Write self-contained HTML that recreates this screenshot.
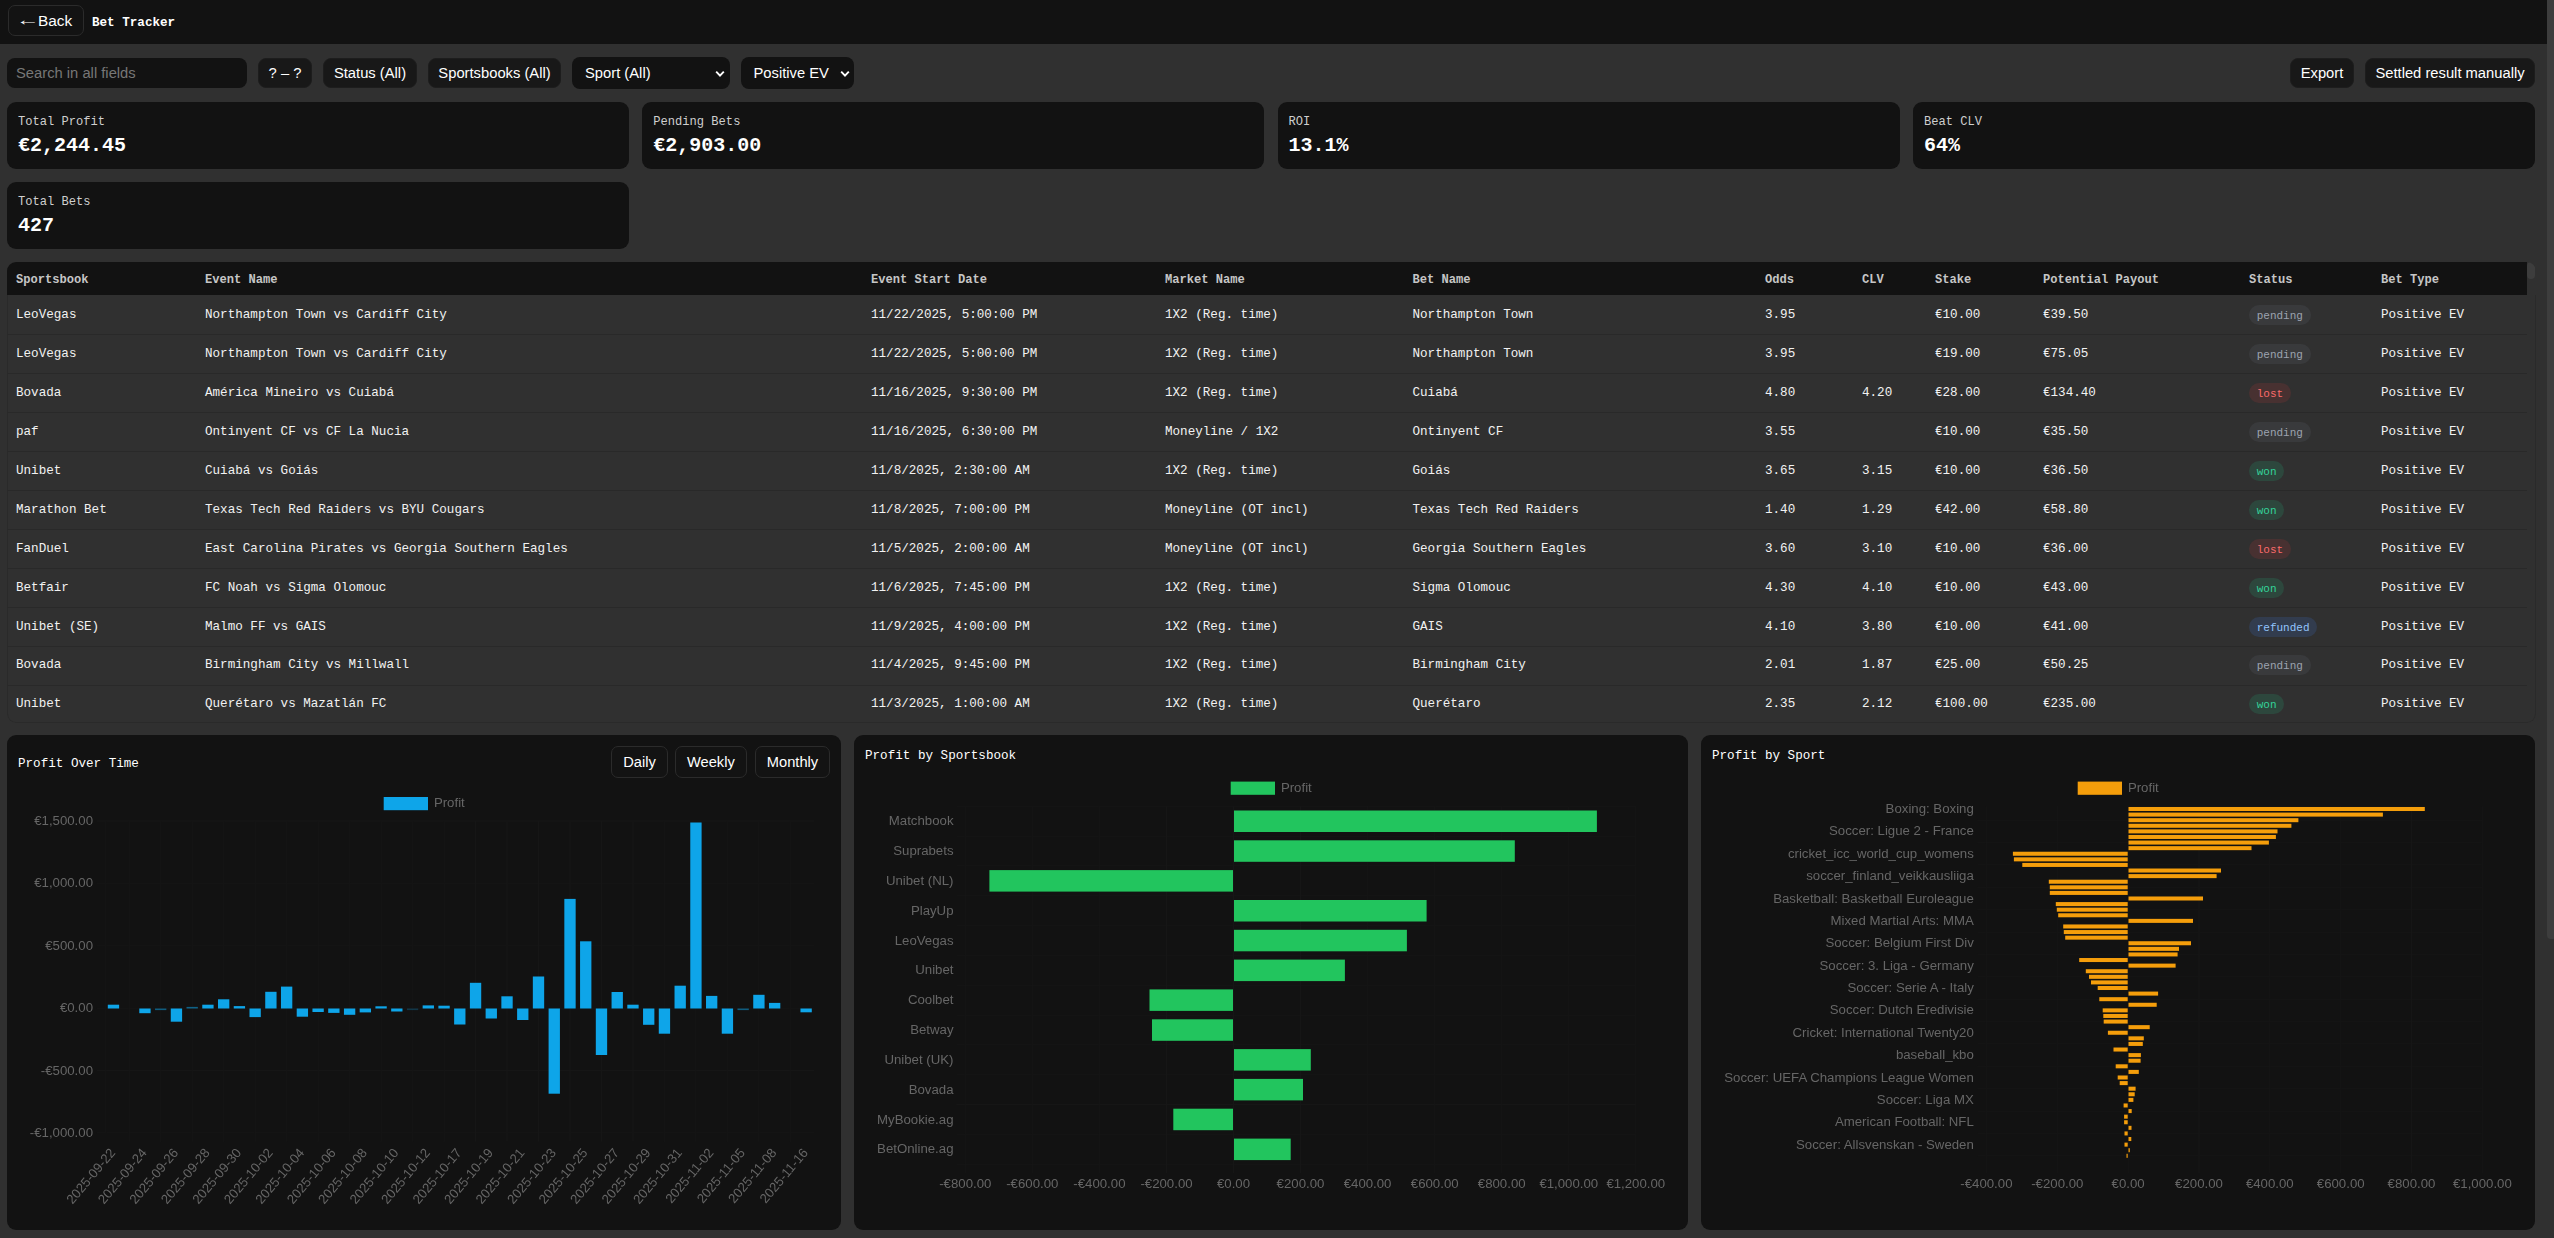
<!DOCTYPE html><html lang="en"><head><meta charset="utf-8"><title>Bet Tracker</title><style>
*{box-sizing:border-box;margin:0;padding:0}
html,body{width:2554px;height:1238px;overflow:hidden;background:#303030}
body{position:relative;font-family:"Liberation Mono", monospace;color:#f2f2f2}
.abs{position:absolute}
#hdr{left:0;top:0;width:2547px;height:44px;background:#121212}
#strip{left:2547px;top:0;width:7px;height:1238px;background:#303030}
#thumb{left:2547px;top:-8px;width:9px;height:947px;border-radius:4px;background:#3d3d3d}
.btn{position:absolute;font-family:"Liberation Sans", sans-serif;color:#fff;display:flex;align-items:center;justify-content:center;white-space:nowrap}
.ob{border:1px solid #2b2b2b;border-radius:7px;background:#131313;font-size:15.4px}
.fb{background:#181818;border-radius:8px;font-size:14.75px;top:58px;height:30px;border:1px solid #1d1d1d}
.srch{left:7px;top:58px;width:240px;height:30px;background:#121212;border-radius:8px;font-family:"Liberation Sans", sans-serif;font-size:14.75px;color:#777;line-height:30px;padding-left:9px;white-space:nowrap}
.sel{background:#121212;border-radius:8px;font-size:14.75px;top:57px;height:32px;justify-content:flex-start}
.card{position:absolute;background:#121212;border-radius:9px}
.card .l{position:absolute;left:11px;top:13px;font-size:12.1px;line-height:14px;color:#cfcfcf;white-space:nowrap}
.card .v{position:absolute;left:11px;top:32px;font-size:20px;line-height:24px;font-weight:bold;color:#fff;white-space:nowrap}
#tbl{left:7px;top:262px;width:2528.5px;height:461px;border-radius:9px;overflow:hidden}
.ln{position:absolute;background:#2a2a2a}
#thead{left:0;top:0;width:2520px;height:33.2px;background:#121212}
.th{position:absolute;top:0;height:33px;line-height:36.8px;font-size:12.1px;font-weight:bold;color:#c6c6c6;white-space:nowrap}
.tr{position:absolute;left:0;width:2520px;height:39px}
.td{position:absolute;top:0;height:38px;line-height:38px;font-size:12.6px;color:#f2f2f2;white-space:nowrap}
.bdg{position:absolute;top:9.3px;height:20px;line-height:22.4px;border-radius:10px;font-size:11px;padding:0 7.7px;white-space:nowrap}
.pending{background:#393a3c;color:#9ca3af}
.lost{background:#483131;color:#f96a6a}
.won{background:#2d473d;color:#34d399}
.refunded{background:#323c4e;color:#93c5fd}
.ct{position:absolute;font-size:12.6px;line-height:16px;color:#fff;white-space:nowrap}
svg text{font-family:"Liberation Sans", sans-serif;font-size:13.23px;fill:#666}
</style></head><body>
<div id="hdr" class="abs"></div>
<div id="strip" class="abs"></div><div id="thumb" class="abs"></div>
<div class="btn ob" style="left:8px;top:5px;width:76px;height:31px;justify-content:flex-start;padding-left:7.3px"><span style="display:inline-block;transform:translateY(-1px) scaleX(1.54);transform-origin:0 50%;width:21.7px">←</span>Back</div>
<div class="abs" style="left:92px;top:14.5px;font-size:12.6px;line-height:16px;font-weight:bold;color:#fff;white-space:nowrap">Bet Tracker</div>
<div class="abs srch">Search in all fields</div>
<div class="btn fb" style="left:258px;width:54px">? – ?</div>
<div class="btn fb" style="left:323px;width:94px">Status (All)</div>
<div class="btn fb" style="left:428px;width:133px">Sportsbooks (All)</div>
<div class="btn sel" style="left:572px;width:158px;padding-left:13px">Sport (All)<svg class="abs" style="right:5px;top:12.6px" width="10" height="8" viewBox="0 0 10 8"><path d="M1.2 1.6 L5 5.6 L8.8 1.6" fill="none" stroke="#fff" stroke-width="1.9"/></svg></div>
<div class="btn sel" style="left:741px;width:113px;padding-left:12.5px">Positive EV<svg class="abs" style="right:4.5px;top:12.6px" width="10" height="8" viewBox="0 0 10 8"><path d="M1.2 1.6 L5 5.6 L8.8 1.6" fill="none" stroke="#fff" stroke-width="1.9"/></svg></div>
<div class="btn fb" style="left:2290px;width:64px">Export</div>
<div class="btn fb" style="left:2365px;width:170px">Settled result manually</div>
<div class="card" style="left:7.0px;top:102px;width:622.1px;height:67px"><div class="l">Total Profit</div><div class="v">€2,244.45</div></div>
<div class="card" style="left:642.3px;top:102px;width:622.1px;height:67px"><div class="l">Pending Bets</div><div class="v">€2,903.00</div></div>
<div class="card" style="left:1277.6px;top:102px;width:622.1px;height:67px"><div class="l">ROI</div><div class="v">13.1%</div></div>
<div class="card" style="left:1912.9px;top:102px;width:622.1px;height:67px"><div class="l">Beat CLV</div><div class="v">64%</div></div>
<div class="card" style="left:7px;top:182px;width:622.1px;height:67px"><div class="l">Total Bets</div><div class="v">427</div></div>
<div id="tbl" class="abs"><div id="thead" class="abs">
<div class="th" style="left:9px">Sportsbook</div>
<div class="th" style="left:198px">Event Name</div>
<div class="th" style="left:864px">Event Start Date</div>
<div class="th" style="left:1158px">Market Name</div>
<div class="th" style="left:1405.5px">Bet Name</div>
<div class="th" style="left:1758px">Odds</div>
<div class="th" style="left:1855px">CLV</div>
<div class="th" style="left:1928px">Stake</div>
<div class="th" style="left:2036px">Potential Payout</div>
<div class="th" style="left:2242px">Status</div>
<div class="th" style="left:2374px">Bet Type</div>
</div>
<div class="abs" style="left:2520px;top:0;width:8px;height:17px;border-radius:4px;background:#3d3d3d"></div>
<div class="abs" style="left:0;top:33px;width:2528.5px;height:428px;border:1px solid #2a2a2a;border-top:none;border-radius:0 0 9px 9px"></div>
<div class="ln" style="left:0;top:72px;width:2520px;height:1px;background:#292929"></div>
<div class="ln" style="left:0;top:111px;width:2520px;height:1px;background:#292929"></div>
<div class="ln" style="left:0;top:150px;width:2520px;height:1px;background:#292929"></div>
<div class="ln" style="left:0;top:189px;width:2520px;height:1px;background:#292929"></div>
<div class="ln" style="left:0;top:228px;width:2520px;height:1px;background:#292929"></div>
<div class="ln" style="left:0;top:267px;width:2520px;height:1px;background:#292929"></div>
<div class="ln" style="left:0;top:306px;width:2520px;height:1px;background:#292929"></div>
<div class="ln" style="left:0;top:345px;width:2520px;height:1px;background:#292929"></div>
<div class="ln" style="left:0;top:384px;width:2520px;height:1px;background:#292929"></div>
<div class="ln" style="left:0;top:423px;width:2520px;height:1px;background:#292929"></div>
<div class="tr" style="top:33.9px">
<span class="td" style="left:9px">LeoVegas</span>
<span class="td" style="left:198px">Northampton Town vs Cardiff City</span>
<span class="td" style="left:864px">11/22/2025, 5:00:00 PM</span>
<span class="td" style="left:1158px">1X2 (Reg. time)</span>
<span class="td" style="left:1405.5px">Northampton Town</span>
<span class="td" style="left:1758px">3.95</span>
<span class="td" style="left:1928px">€10.00</span>
<span class="td" style="left:2036px">€39.50</span>
<span class="bdg pending" style="left:2242px">pending</span>
<span class="td" style="left:2374px">Positive EV</span>
</div>
<div class="tr" style="top:72.9px">
<span class="td" style="left:9px">LeoVegas</span>
<span class="td" style="left:198px">Northampton Town vs Cardiff City</span>
<span class="td" style="left:864px">11/22/2025, 5:00:00 PM</span>
<span class="td" style="left:1158px">1X2 (Reg. time)</span>
<span class="td" style="left:1405.5px">Northampton Town</span>
<span class="td" style="left:1758px">3.95</span>
<span class="td" style="left:1928px">€19.00</span>
<span class="td" style="left:2036px">€75.05</span>
<span class="bdg pending" style="left:2242px">pending</span>
<span class="td" style="left:2374px">Positive EV</span>
</div>
<div class="tr" style="top:111.9px">
<span class="td" style="left:9px">Bovada</span>
<span class="td" style="left:198px">América Mineiro vs Cuiabá</span>
<span class="td" style="left:864px">11/16/2025, 9:30:00 PM</span>
<span class="td" style="left:1158px">1X2 (Reg. time)</span>
<span class="td" style="left:1405.5px">Cuiabá</span>
<span class="td" style="left:1758px">4.80</span>
<span class="td" style="left:1855px">4.20</span>
<span class="td" style="left:1928px">€28.00</span>
<span class="td" style="left:2036px">€134.40</span>
<span class="bdg lost" style="left:2242px">lost</span>
<span class="td" style="left:2374px">Positive EV</span>
</div>
<div class="tr" style="top:150.9px">
<span class="td" style="left:9px">paf</span>
<span class="td" style="left:198px">Ontinyent CF vs CF La Nucia</span>
<span class="td" style="left:864px">11/16/2025, 6:30:00 PM</span>
<span class="td" style="left:1158px">Moneyline / 1X2</span>
<span class="td" style="left:1405.5px">Ontinyent CF</span>
<span class="td" style="left:1758px">3.55</span>
<span class="td" style="left:1928px">€10.00</span>
<span class="td" style="left:2036px">€35.50</span>
<span class="bdg pending" style="left:2242px">pending</span>
<span class="td" style="left:2374px">Positive EV</span>
</div>
<div class="tr" style="top:189.9px">
<span class="td" style="left:9px">Unibet</span>
<span class="td" style="left:198px">Cuiabá vs Goiás</span>
<span class="td" style="left:864px">11/8/2025, 2:30:00 AM</span>
<span class="td" style="left:1158px">1X2 (Reg. time)</span>
<span class="td" style="left:1405.5px">Goiás</span>
<span class="td" style="left:1758px">3.65</span>
<span class="td" style="left:1855px">3.15</span>
<span class="td" style="left:1928px">€10.00</span>
<span class="td" style="left:2036px">€36.50</span>
<span class="bdg won" style="left:2242px">won</span>
<span class="td" style="left:2374px">Positive EV</span>
</div>
<div class="tr" style="top:228.9px">
<span class="td" style="left:9px">Marathon Bet</span>
<span class="td" style="left:198px">Texas Tech Red Raiders vs BYU Cougars</span>
<span class="td" style="left:864px">11/8/2025, 7:00:00 PM</span>
<span class="td" style="left:1158px">Moneyline (OT incl)</span>
<span class="td" style="left:1405.5px">Texas Tech Red Raiders</span>
<span class="td" style="left:1758px">1.40</span>
<span class="td" style="left:1855px">1.29</span>
<span class="td" style="left:1928px">€42.00</span>
<span class="td" style="left:2036px">€58.80</span>
<span class="bdg won" style="left:2242px">won</span>
<span class="td" style="left:2374px">Positive EV</span>
</div>
<div class="tr" style="top:267.9px">
<span class="td" style="left:9px">FanDuel</span>
<span class="td" style="left:198px">East Carolina Pirates vs Georgia Southern Eagles</span>
<span class="td" style="left:864px">11/5/2025, 2:00:00 AM</span>
<span class="td" style="left:1158px">Moneyline (OT incl)</span>
<span class="td" style="left:1405.5px">Georgia Southern Eagles</span>
<span class="td" style="left:1758px">3.60</span>
<span class="td" style="left:1855px">3.10</span>
<span class="td" style="left:1928px">€10.00</span>
<span class="td" style="left:2036px">€36.00</span>
<span class="bdg lost" style="left:2242px">lost</span>
<span class="td" style="left:2374px">Positive EV</span>
</div>
<div class="tr" style="top:306.9px">
<span class="td" style="left:9px">Betfair</span>
<span class="td" style="left:198px">FC Noah vs Sigma Olomouc</span>
<span class="td" style="left:864px">11/6/2025, 7:45:00 PM</span>
<span class="td" style="left:1158px">1X2 (Reg. time)</span>
<span class="td" style="left:1405.5px">Sigma Olomouc</span>
<span class="td" style="left:1758px">4.30</span>
<span class="td" style="left:1855px">4.10</span>
<span class="td" style="left:1928px">€10.00</span>
<span class="td" style="left:2036px">€43.00</span>
<span class="bdg won" style="left:2242px">won</span>
<span class="td" style="left:2374px">Positive EV</span>
</div>
<div class="tr" style="top:345.9px">
<span class="td" style="left:9px">Unibet (SE)</span>
<span class="td" style="left:198px">Malmo FF vs GAIS</span>
<span class="td" style="left:864px">11/9/2025, 4:00:00 PM</span>
<span class="td" style="left:1158px">1X2 (Reg. time)</span>
<span class="td" style="left:1405.5px">GAIS</span>
<span class="td" style="left:1758px">4.10</span>
<span class="td" style="left:1855px">3.80</span>
<span class="td" style="left:1928px">€10.00</span>
<span class="td" style="left:2036px">€41.00</span>
<span class="bdg refunded" style="left:2242px">refunded</span>
<span class="td" style="left:2374px">Positive EV</span>
</div>
<div class="tr" style="top:383.9px">
<span class="td" style="left:9px">Bovada</span>
<span class="td" style="left:198px">Birmingham City vs Millwall</span>
<span class="td" style="left:864px">11/4/2025, 9:45:00 PM</span>
<span class="td" style="left:1158px">1X2 (Reg. time)</span>
<span class="td" style="left:1405.5px">Birmingham City</span>
<span class="td" style="left:1758px">2.01</span>
<span class="td" style="left:1855px">1.87</span>
<span class="td" style="left:1928px">€25.00</span>
<span class="td" style="left:2036px">€50.25</span>
<span class="bdg pending" style="left:2242px">pending</span>
<span class="td" style="left:2374px">Positive EV</span>
</div>
<div class="tr" style="top:422.9px">
<span class="td" style="left:9px">Unibet</span>
<span class="td" style="left:198px">Querétaro vs Mazatlán FC</span>
<span class="td" style="left:864px">11/3/2025, 1:00:00 AM</span>
<span class="td" style="left:1158px">1X2 (Reg. time)</span>
<span class="td" style="left:1405.5px">Querétaro</span>
<span class="td" style="left:1758px">2.35</span>
<span class="td" style="left:1855px">2.12</span>
<span class="td" style="left:1928px">€100.00</span>
<span class="td" style="left:2036px">€235.00</span>
<span class="bdg won" style="left:2242px">won</span>
<span class="td" style="left:2374px">Positive EV</span>
</div>
</div>
<div class="card" style="left:7px;top:735px;width:834px;height:495px"></div>
<div class="card" style="left:854px;top:735px;width:834px;height:495px"></div>
<div class="card" style="left:1701px;top:735px;width:834px;height:495px"></div>
<div class="ct" style="left:18px;top:756.2px">Profit Over Time</div>
<div class="ct" style="left:865px;top:747.5px">Profit by Sportsbook</div>
<div class="ct" style="left:1712px;top:747.5px">Profit by Sport</div>
<div class="btn ob" style="left:611px;top:746px;width:57px;height:31.6px;font-size:14.67px">Daily</div>
<div class="btn ob" style="left:675px;top:746px;width:71.8px;height:31.6px;font-size:14.67px">Weekly</div>
<div class="btn ob" style="left:755px;top:746px;width:75px;height:31.6px;font-size:14.67px">Monthly</div>
<svg class="abs" style="left:0;top:730px;will-change:transform" width="2547" height="508" viewBox="0 730 2547 508">
<line x1="96.8" x2="814.0" y1="821.0" y2="821.0" stroke="#161616" stroke-width="1"/>
<line x1="96.8" x2="814.0" y1="883.4" y2="883.4" stroke="#161616" stroke-width="1"/>
<line x1="96.8" x2="814.0" y1="945.8" y2="945.8" stroke="#161616" stroke-width="1"/>
<line x1="96.8" x2="814.0" y1="1008.1" y2="1008.1" stroke="#161616" stroke-width="1"/>
<line x1="96.8" x2="814.0" y1="1070.5" y2="1070.5" stroke="#161616" stroke-width="1"/>
<line x1="96.8" x2="814.0" y1="1132.9" y2="1132.9" stroke="#161616" stroke-width="1"/>
<line x1="105.6" x2="105.6" y1="821.0" y2="1132.9" stroke="#161616" stroke-width="1"/>
<line x1="129.2" x2="129.2" y1="821.0" y2="1141.7" stroke="#161616" stroke-width="1"/>
<line x1="160.7" x2="160.7" y1="821.0" y2="1141.7" stroke="#161616" stroke-width="1"/>
<line x1="192.2" x2="192.2" y1="821.0" y2="1141.7" stroke="#161616" stroke-width="1"/>
<line x1="223.7" x2="223.7" y1="821.0" y2="1141.7" stroke="#161616" stroke-width="1"/>
<line x1="255.2" x2="255.2" y1="821.0" y2="1141.7" stroke="#161616" stroke-width="1"/>
<line x1="286.6" x2="286.6" y1="821.0" y2="1141.7" stroke="#161616" stroke-width="1"/>
<line x1="318.1" x2="318.1" y1="821.0" y2="1141.7" stroke="#161616" stroke-width="1"/>
<line x1="349.6" x2="349.6" y1="821.0" y2="1141.7" stroke="#161616" stroke-width="1"/>
<line x1="381.1" x2="381.1" y1="821.0" y2="1141.7" stroke="#161616" stroke-width="1"/>
<line x1="412.6" x2="412.6" y1="821.0" y2="1141.7" stroke="#161616" stroke-width="1"/>
<line x1="444.1" x2="444.1" y1="821.0" y2="1141.7" stroke="#161616" stroke-width="1"/>
<line x1="475.5" x2="475.5" y1="821.0" y2="1141.7" stroke="#161616" stroke-width="1"/>
<line x1="507.0" x2="507.0" y1="821.0" y2="1141.7" stroke="#161616" stroke-width="1"/>
<line x1="538.5" x2="538.5" y1="821.0" y2="1141.7" stroke="#161616" stroke-width="1"/>
<line x1="570.0" x2="570.0" y1="821.0" y2="1141.7" stroke="#161616" stroke-width="1"/>
<line x1="601.5" x2="601.5" y1="821.0" y2="1141.7" stroke="#161616" stroke-width="1"/>
<line x1="633.0" x2="633.0" y1="821.0" y2="1141.7" stroke="#161616" stroke-width="1"/>
<line x1="664.4" x2="664.4" y1="821.0" y2="1141.7" stroke="#161616" stroke-width="1"/>
<line x1="695.9" x2="695.9" y1="821.0" y2="1141.7" stroke="#161616" stroke-width="1"/>
<line x1="727.4" x2="727.4" y1="821.0" y2="1141.7" stroke="#161616" stroke-width="1"/>
<line x1="758.9" x2="758.9" y1="821.0" y2="1141.7" stroke="#161616" stroke-width="1"/>
<line x1="790.4" x2="790.4" y1="821.0" y2="1141.7" stroke="#161616" stroke-width="1"/>
<rect x="107.80" y="1004.70" width="11.33" height="3.80" fill="#0ea5e9"/>
<rect x="139.29" y="1008.50" width="11.33" height="4.70" fill="#0ea5e9"/>
<rect x="155.03" y="1008.50" width="11.33" height="1.60" fill="#0ea5e9" fill-opacity="0.50"/>
<rect x="170.77" y="1008.50" width="11.33" height="13.20" fill="#0ea5e9"/>
<rect x="186.52" y="1006.90" width="11.33" height="1.60" fill="#0ea5e9" fill-opacity="0.55"/>
<rect x="202.26" y="1004.70" width="11.33" height="3.80" fill="#0ea5e9"/>
<rect x="218.00" y="999.30" width="11.33" height="9.20" fill="#0ea5e9"/>
<rect x="233.74" y="1006.10" width="11.33" height="2.40" fill="#0ea5e9"/>
<rect x="249.48" y="1008.50" width="11.33" height="8.60" fill="#0ea5e9"/>
<rect x="265.23" y="991.80" width="11.33" height="16.70" fill="#0ea5e9"/>
<rect x="280.97" y="986.60" width="11.33" height="21.90" fill="#0ea5e9"/>
<rect x="296.71" y="1008.50" width="11.33" height="8.20" fill="#0ea5e9"/>
<rect x="312.45" y="1008.50" width="11.33" height="3.50" fill="#0ea5e9"/>
<rect x="328.20" y="1008.50" width="11.33" height="4.40" fill="#0ea5e9"/>
<rect x="343.94" y="1008.50" width="11.33" height="6.30" fill="#0ea5e9"/>
<rect x="359.68" y="1008.50" width="11.33" height="3.90" fill="#0ea5e9"/>
<rect x="375.42" y="1006.30" width="11.33" height="2.20" fill="#0ea5e9"/>
<rect x="391.16" y="1008.50" width="11.33" height="3.00" fill="#0ea5e9"/>
<rect x="406.91" y="1008.50" width="11.33" height="1.60" fill="#0ea5e9" fill-opacity="0.25"/>
<rect x="422.65" y="1005.40" width="11.33" height="3.10" fill="#0ea5e9"/>
<rect x="438.39" y="1005.70" width="11.33" height="2.80" fill="#0ea5e9"/>
<rect x="454.13" y="1008.50" width="11.33" height="16.00" fill="#0ea5e9"/>
<rect x="469.88" y="982.80" width="11.33" height="25.70" fill="#0ea5e9"/>
<rect x="485.62" y="1008.50" width="11.33" height="10.00" fill="#0ea5e9"/>
<rect x="501.36" y="996.30" width="11.33" height="12.20" fill="#0ea5e9"/>
<rect x="517.10" y="1008.50" width="11.33" height="11.50" fill="#0ea5e9"/>
<rect x="532.84" y="976.50" width="11.33" height="32.00" fill="#0ea5e9"/>
<rect x="548.59" y="1008.50" width="11.33" height="85.20" fill="#0ea5e9"/>
<rect x="564.33" y="898.90" width="11.33" height="109.60" fill="#0ea5e9"/>
<rect x="580.07" y="941.30" width="11.33" height="67.20" fill="#0ea5e9"/>
<rect x="595.81" y="1008.50" width="11.33" height="46.50" fill="#0ea5e9"/>
<rect x="611.56" y="992.00" width="11.33" height="16.50" fill="#0ea5e9"/>
<rect x="627.30" y="1004.70" width="11.33" height="3.80" fill="#0ea5e9"/>
<rect x="643.04" y="1008.50" width="11.33" height="16.30" fill="#0ea5e9"/>
<rect x="658.78" y="1008.50" width="11.33" height="25.20" fill="#0ea5e9"/>
<rect x="674.52" y="985.70" width="11.33" height="22.80" fill="#0ea5e9"/>
<rect x="690.27" y="822.50" width="11.33" height="186.00" fill="#0ea5e9"/>
<rect x="706.01" y="995.90" width="11.33" height="12.60" fill="#0ea5e9"/>
<rect x="721.75" y="1008.50" width="11.33" height="25.20" fill="#0ea5e9"/>
<rect x="737.49" y="1008.50" width="11.33" height="1.60" fill="#0ea5e9" fill-opacity="0.50"/>
<rect x="753.24" y="994.80" width="11.33" height="13.70" fill="#0ea5e9"/>
<rect x="768.98" y="1002.90" width="11.33" height="5.60" fill="#0ea5e9"/>
<rect x="800.46" y="1008.50" width="11.33" height="3.80" fill="#0ea5e9"/>
<text x="93" y="825.0" text-anchor="end">€1,500.00</text>
<text x="93" y="887.4" text-anchor="end">€1,000.00</text>
<text x="93" y="949.8" text-anchor="end">€500.00</text>
<text x="93" y="1012.1" text-anchor="end">€0.00</text>
<text x="93" y="1074.5" text-anchor="end">-€500.00</text>
<text x="93" y="1136.9" text-anchor="end">-€1,000.00</text>
<text transform="translate(112.5,1150.1) rotate(-50)" text-anchor="end" y="4.6">2025-09-22</text>
<text transform="translate(144.0,1150.1) rotate(-50)" text-anchor="end" y="4.6">2025-09-24</text>
<text transform="translate(175.4,1150.1) rotate(-50)" text-anchor="end" y="4.6">2025-09-26</text>
<text transform="translate(206.9,1150.1) rotate(-50)" text-anchor="end" y="4.6">2025-09-28</text>
<text transform="translate(238.4,1150.1) rotate(-50)" text-anchor="end" y="4.6">2025-09-30</text>
<text transform="translate(269.9,1150.1) rotate(-50)" text-anchor="end" y="4.6">2025-10-02</text>
<text transform="translate(301.4,1150.1) rotate(-50)" text-anchor="end" y="4.6">2025-10-04</text>
<text transform="translate(332.9,1150.1) rotate(-50)" text-anchor="end" y="4.6">2025-10-06</text>
<text transform="translate(364.3,1150.1) rotate(-50)" text-anchor="end" y="4.6">2025-10-08</text>
<text transform="translate(395.8,1150.1) rotate(-50)" text-anchor="end" y="4.6">2025-10-10</text>
<text transform="translate(427.3,1150.1) rotate(-50)" text-anchor="end" y="4.6">2025-10-12</text>
<text transform="translate(458.8,1150.1) rotate(-50)" text-anchor="end" y="4.6">2025-10-17</text>
<text transform="translate(490.3,1150.1) rotate(-50)" text-anchor="end" y="4.6">2025-10-19</text>
<text transform="translate(521.8,1150.1) rotate(-50)" text-anchor="end" y="4.6">2025-10-21</text>
<text transform="translate(553.3,1150.1) rotate(-50)" text-anchor="end" y="4.6">2025-10-23</text>
<text transform="translate(584.7,1150.1) rotate(-50)" text-anchor="end" y="4.6">2025-10-25</text>
<text transform="translate(616.2,1150.1) rotate(-50)" text-anchor="end" y="4.6">2025-10-27</text>
<text transform="translate(647.7,1150.1) rotate(-50)" text-anchor="end" y="4.6">2025-10-29</text>
<text transform="translate(679.2,1150.1) rotate(-50)" text-anchor="end" y="4.6">2025-10-31</text>
<text transform="translate(710.7,1150.1) rotate(-50)" text-anchor="end" y="4.6">2025-11-02</text>
<text transform="translate(742.2,1150.1) rotate(-50)" text-anchor="end" y="4.6">2025-11-05</text>
<text transform="translate(773.6,1150.1) rotate(-50)" text-anchor="end" y="4.6">2025-11-08</text>
<text transform="translate(805.1,1150.1) rotate(-50)" text-anchor="end" y="4.6">2025-11-16</text>
<rect x="383.7" y="797.0" width="44.3" height="13.2" fill="#0ea5e9"/>
<text x="433.9" y="807.2">Profit</text>
<line x1="956.5" x2="1635.8" y1="806.3" y2="806.3" stroke="#161616" stroke-width="1"/>
<line x1="956.5" x2="1635.8" y1="836.1" y2="836.1" stroke="#161616" stroke-width="1"/>
<line x1="956.5" x2="1635.8" y1="865.9" y2="865.9" stroke="#161616" stroke-width="1"/>
<line x1="956.5" x2="1635.8" y1="895.8" y2="895.8" stroke="#161616" stroke-width="1"/>
<line x1="956.5" x2="1635.8" y1="925.6" y2="925.6" stroke="#161616" stroke-width="1"/>
<line x1="956.5" x2="1635.8" y1="955.4" y2="955.4" stroke="#161616" stroke-width="1"/>
<line x1="956.5" x2="1635.8" y1="985.2" y2="985.2" stroke="#161616" stroke-width="1"/>
<line x1="956.5" x2="1635.8" y1="1015.1" y2="1015.1" stroke="#161616" stroke-width="1"/>
<line x1="956.5" x2="1635.8" y1="1044.9" y2="1044.9" stroke="#161616" stroke-width="1"/>
<line x1="956.5" x2="1635.8" y1="1074.7" y2="1074.7" stroke="#161616" stroke-width="1"/>
<line x1="956.5" x2="1635.8" y1="1104.5" y2="1104.5" stroke="#161616" stroke-width="1"/>
<line x1="956.5" x2="1635.8" y1="1134.4" y2="1134.4" stroke="#161616" stroke-width="1"/>
<line x1="956.5" x2="1635.8" y1="1164.2" y2="1164.2" stroke="#161616" stroke-width="1"/>
<line x1="965.3" x2="965.3" y1="806.3" y2="1173.0" stroke="#161616" stroke-width="1"/>
<line x1="1032.3" x2="1032.3" y1="806.3" y2="1173.0" stroke="#161616" stroke-width="1"/>
<line x1="1099.4" x2="1099.4" y1="806.3" y2="1173.0" stroke="#161616" stroke-width="1"/>
<line x1="1166.5" x2="1166.5" y1="806.3" y2="1173.0" stroke="#161616" stroke-width="1"/>
<line x1="1233.5" x2="1233.5" y1="806.3" y2="1173.0" stroke="#161616" stroke-width="1"/>
<line x1="1300.5" x2="1300.5" y1="806.3" y2="1173.0" stroke="#161616" stroke-width="1"/>
<line x1="1367.6" x2="1367.6" y1="806.3" y2="1173.0" stroke="#161616" stroke-width="1"/>
<line x1="1434.7" x2="1434.7" y1="806.3" y2="1173.0" stroke="#161616" stroke-width="1"/>
<line x1="1501.7" x2="1501.7" y1="806.3" y2="1173.0" stroke="#161616" stroke-width="1"/>
<line x1="1568.8" x2="1568.8" y1="806.3" y2="1173.0" stroke="#161616" stroke-width="1"/>
<line x1="1635.8" x2="1635.8" y1="806.3" y2="1173.0" stroke="#161616" stroke-width="1"/>
<rect x="1234.0" y="810.5" width="362.9" height="21.5" fill="#22c55e"/>
<text x="953.5" y="825.2" text-anchor="end">Matchbook</text>
<rect x="1234.0" y="840.3" width="280.8" height="21.5" fill="#22c55e"/>
<text x="953.5" y="855.0" text-anchor="end">Suprabets</text>
<rect x="989.4" y="870.1" width="243.6" height="21.5" fill="#22c55e"/>
<text x="953.5" y="884.9" text-anchor="end">Unibet (NL)</text>
<rect x="1234.0" y="900.0" width="192.6" height="21.5" fill="#22c55e"/>
<text x="953.5" y="914.7" text-anchor="end">PlayUp</text>
<rect x="1234.0" y="929.8" width="172.9" height="21.5" fill="#22c55e"/>
<text x="953.5" y="944.5" text-anchor="end">LeoVegas</text>
<rect x="1234.0" y="959.6" width="110.9" height="21.5" fill="#22c55e"/>
<text x="953.5" y="974.3" text-anchor="end">Unibet</text>
<rect x="1149.5" y="989.4" width="83.5" height="21.5" fill="#22c55e"/>
<text x="953.5" y="1004.2" text-anchor="end">Coolbet</text>
<rect x="1152.0" y="1019.3" width="81.0" height="21.5" fill="#22c55e"/>
<text x="953.5" y="1034.0" text-anchor="end">Betway</text>
<rect x="1234.0" y="1049.1" width="76.8" height="21.5" fill="#22c55e"/>
<text x="953.5" y="1063.8" text-anchor="end">Unibet (UK)</text>
<rect x="1234.0" y="1078.9" width="69.0" height="21.5" fill="#22c55e"/>
<text x="953.5" y="1093.6" text-anchor="end">Bovada</text>
<rect x="1173.3" y="1108.7" width="59.7" height="21.5" fill="#22c55e"/>
<text x="953.5" y="1123.5" text-anchor="end">MyBookie.ag</text>
<rect x="1234.0" y="1138.6" width="56.7" height="21.5" fill="#22c55e"/>
<text x="953.5" y="1153.3" text-anchor="end">BetOnline.ag</text>
<text x="965.3" y="1187.5" text-anchor="middle">-€800.00</text>
<text x="1032.3" y="1187.5" text-anchor="middle">-€600.00</text>
<text x="1099.4" y="1187.5" text-anchor="middle">-€400.00</text>
<text x="1166.5" y="1187.5" text-anchor="middle">-€200.00</text>
<text x="1233.5" y="1187.5" text-anchor="middle">€0.00</text>
<text x="1300.5" y="1187.5" text-anchor="middle">€200.00</text>
<text x="1367.6" y="1187.5" text-anchor="middle">€400.00</text>
<text x="1434.7" y="1187.5" text-anchor="middle">€600.00</text>
<text x="1501.7" y="1187.5" text-anchor="middle">€800.00</text>
<text x="1568.8" y="1187.5" text-anchor="middle">€1,000.00</text>
<text x="1635.8" y="1187.5" text-anchor="middle">€1,200.00</text>
<rect x="1230.7" y="781.6" width="44.3" height="13.2" fill="#22c55e"/>
<text x="1280.9" y="791.8">Profit</text>
<line x1="1977.6" x2="2482.4" y1="820.2" y2="820.2" stroke="#161616" stroke-width="1"/>
<line x1="1977.6" x2="2482.4" y1="842.6" y2="842.6" stroke="#161616" stroke-width="1"/>
<line x1="1977.6" x2="2482.4" y1="864.9" y2="864.9" stroke="#161616" stroke-width="1"/>
<line x1="1977.6" x2="2482.4" y1="887.3" y2="887.3" stroke="#161616" stroke-width="1"/>
<line x1="1977.6" x2="2482.4" y1="909.7" y2="909.7" stroke="#161616" stroke-width="1"/>
<line x1="1977.6" x2="2482.4" y1="932.1" y2="932.1" stroke="#161616" stroke-width="1"/>
<line x1="1977.6" x2="2482.4" y1="954.4" y2="954.4" stroke="#161616" stroke-width="1"/>
<line x1="1977.6" x2="2482.4" y1="976.8" y2="976.8" stroke="#161616" stroke-width="1"/>
<line x1="1977.6" x2="2482.4" y1="999.2" y2="999.2" stroke="#161616" stroke-width="1"/>
<line x1="1977.6" x2="2482.4" y1="1021.6" y2="1021.6" stroke="#161616" stroke-width="1"/>
<line x1="1977.6" x2="2482.4" y1="1043.9" y2="1043.9" stroke="#161616" stroke-width="1"/>
<line x1="1977.6" x2="2482.4" y1="1066.3" y2="1066.3" stroke="#161616" stroke-width="1"/>
<line x1="1977.6" x2="2482.4" y1="1088.7" y2="1088.7" stroke="#161616" stroke-width="1"/>
<line x1="1977.6" x2="2482.4" y1="1111.1" y2="1111.1" stroke="#161616" stroke-width="1"/>
<line x1="1977.6" x2="2482.4" y1="1133.4" y2="1133.4" stroke="#161616" stroke-width="1"/>
<line x1="1977.6" x2="2482.4" y1="1155.8" y2="1155.8" stroke="#161616" stroke-width="1"/>
<line x1="1986.4" x2="1986.4" y1="806.2" y2="1173.0" stroke="#161616" stroke-width="1"/>
<line x1="2057.3" x2="2057.3" y1="806.2" y2="1173.0" stroke="#161616" stroke-width="1"/>
<line x1="2128.1" x2="2128.1" y1="806.2" y2="1173.0" stroke="#161616" stroke-width="1"/>
<line x1="2199.0" x2="2199.0" y1="806.2" y2="1173.0" stroke="#161616" stroke-width="1"/>
<line x1="2269.8" x2="2269.8" y1="806.2" y2="1173.0" stroke="#161616" stroke-width="1"/>
<line x1="2340.7" x2="2340.7" y1="806.2" y2="1173.0" stroke="#161616" stroke-width="1"/>
<line x1="2411.5" x2="2411.5" y1="806.2" y2="1173.0" stroke="#161616" stroke-width="1"/>
<line x1="2482.4" x2="2482.4" y1="806.2" y2="1173.0" stroke="#161616" stroke-width="1"/>
<rect x="2128.5" y="806.98" width="296.3" height="4.03" fill="#f59e0b"/>
<rect x="2128.5" y="812.58" width="254.4" height="4.03" fill="#f59e0b"/>
<rect x="2128.5" y="818.17" width="169.9" height="4.03" fill="#f59e0b"/>
<rect x="2128.5" y="823.76" width="162.9" height="4.03" fill="#f59e0b"/>
<rect x="2128.5" y="829.36" width="149.0" height="4.03" fill="#f59e0b"/>
<rect x="2128.5" y="834.95" width="147.4" height="4.03" fill="#f59e0b"/>
<rect x="2128.5" y="840.55" width="140.4" height="4.03" fill="#f59e0b"/>
<rect x="2128.5" y="846.14" width="123.0" height="4.03" fill="#f59e0b"/>
<rect x="2012.9" y="851.73" width="114.8" height="4.03" fill="#f59e0b"/>
<rect x="2013.9" y="857.33" width="113.8" height="4.03" fill="#f59e0b"/>
<rect x="2022.3" y="862.92" width="105.4" height="4.03" fill="#f59e0b"/>
<rect x="2128.5" y="868.51" width="92.5" height="4.03" fill="#f59e0b"/>
<rect x="2128.5" y="874.11" width="88.1" height="4.03" fill="#f59e0b"/>
<rect x="2048.8" y="879.70" width="78.9" height="4.03" fill="#f59e0b"/>
<rect x="2049.8" y="885.30" width="77.9" height="4.03" fill="#f59e0b"/>
<rect x="2049.8" y="890.89" width="77.9" height="4.03" fill="#f59e0b"/>
<rect x="2128.5" y="896.48" width="74.5" height="4.03" fill="#f59e0b"/>
<rect x="2055.8" y="902.08" width="71.9" height="4.03" fill="#f59e0b"/>
<rect x="2056.8" y="907.67" width="70.9" height="4.03" fill="#f59e0b"/>
<rect x="2058.2" y="913.26" width="69.5" height="4.03" fill="#f59e0b"/>
<rect x="2128.5" y="918.86" width="64.5" height="4.03" fill="#f59e0b"/>
<rect x="2063.2" y="924.45" width="64.5" height="4.03" fill="#f59e0b"/>
<rect x="2063.8" y="930.05" width="63.9" height="4.03" fill="#f59e0b"/>
<rect x="2065.2" y="935.64" width="62.5" height="4.03" fill="#f59e0b"/>
<rect x="2128.5" y="941.23" width="62.5" height="4.03" fill="#f59e0b"/>
<rect x="2128.5" y="946.83" width="50.5" height="4.03" fill="#f59e0b"/>
<rect x="2128.5" y="952.42" width="49.1" height="4.03" fill="#f59e0b"/>
<rect x="2079.2" y="958.01" width="48.5" height="4.03" fill="#f59e0b"/>
<rect x="2128.5" y="963.61" width="47.1" height="4.03" fill="#f59e0b"/>
<rect x="2085.8" y="969.20" width="41.9" height="4.03" fill="#f59e0b"/>
<rect x="2089.0" y="974.80" width="38.7" height="4.03" fill="#f59e0b"/>
<rect x="2091.0" y="980.39" width="36.7" height="4.03" fill="#f59e0b"/>
<rect x="2097.7" y="985.98" width="30.0" height="4.03" fill="#f59e0b"/>
<rect x="2128.5" y="991.58" width="29.6" height="4.03" fill="#f59e0b"/>
<rect x="2099.3" y="997.17" width="28.4" height="4.03" fill="#f59e0b"/>
<rect x="2128.5" y="1002.76" width="28.2" height="4.03" fill="#f59e0b"/>
<rect x="2102.7" y="1008.36" width="25.0" height="4.03" fill="#f59e0b"/>
<rect x="2103.3" y="1013.95" width="24.4" height="4.03" fill="#f59e0b"/>
<rect x="2103.7" y="1019.55" width="24.0" height="4.03" fill="#f59e0b"/>
<rect x="2128.5" y="1025.14" width="21.2" height="4.03" fill="#f59e0b"/>
<rect x="2107.9" y="1030.73" width="19.8" height="4.03" fill="#f59e0b"/>
<rect x="2128.5" y="1036.33" width="15.3" height="4.03" fill="#f59e0b"/>
<rect x="2128.5" y="1041.92" width="14.3" height="4.03" fill="#f59e0b"/>
<rect x="2113.5" y="1047.51" width="14.2" height="4.03" fill="#f59e0b"/>
<rect x="2128.5" y="1053.11" width="12.4" height="4.03" fill="#f59e0b"/>
<rect x="2128.5" y="1058.70" width="12.1" height="4.03" fill="#f59e0b"/>
<rect x="2115.7" y="1064.30" width="12.0" height="4.03" fill="#f59e0b"/>
<rect x="2128.5" y="1069.89" width="10.3" height="4.03" fill="#f59e0b"/>
<rect x="2117.7" y="1075.48" width="10.0" height="4.03" fill="#f59e0b"/>
<rect x="2119.7" y="1081.08" width="8.0" height="4.03" fill="#f59e0b"/>
<rect x="2128.5" y="1086.67" width="7.1" height="4.03" fill="#f59e0b"/>
<rect x="2128.5" y="1092.26" width="6.2" height="4.03" fill="#f59e0b"/>
<rect x="2128.5" y="1097.86" width="4.9" height="4.03" fill="#f59e0b"/>
<rect x="2123.6" y="1103.45" width="4.1" height="4.03" fill="#f59e0b"/>
<rect x="2128.5" y="1109.05" width="3.2" height="4.03" fill="#f59e0b"/>
<rect x="2124.1" y="1114.64" width="3.6" height="4.03" fill="#f59e0b"/>
<rect x="2124.1" y="1120.23" width="3.6" height="4.03" fill="#f59e0b"/>
<rect x="2128.5" y="1125.83" width="3.0" height="4.03" fill="#f59e0b"/>
<rect x="2124.5" y="1131.42" width="3.2" height="4.03" fill="#f59e0b"/>
<rect x="2128.5" y="1137.01" width="2.8" height="4.03" fill="#f59e0b"/>
<rect x="2124.5" y="1142.61" width="3.2" height="4.03" fill="#f59e0b"/>
<rect x="2128.5" y="1148.20" width="1.3" height="4.03" fill="#f59e0b"/>
<rect x="2126.5" y="1153.80" width="1.2" height="4.03" fill="#f59e0b"/>
<text x="1973.8" y="813.0" text-anchor="end">Boxing: Boxing</text>
<text x="1973.8" y="835.4" text-anchor="end">Soccer: Ligue 2 - France</text>
<text x="1973.8" y="857.7" text-anchor="end">cricket_icc_world_cup_womens</text>
<text x="1973.8" y="880.1" text-anchor="end">soccer_finland_veikkausliiga</text>
<text x="1973.8" y="902.5" text-anchor="end">Basketball: Basketball Euroleague</text>
<text x="1973.8" y="924.9" text-anchor="end">Mixed Martial Arts: MMA</text>
<text x="1973.8" y="947.2" text-anchor="end">Soccer: Belgium First Div</text>
<text x="1973.8" y="969.6" text-anchor="end">Soccer: 3. Liga - Germany</text>
<text x="1973.8" y="992.0" text-anchor="end">Soccer: Serie A - Italy</text>
<text x="1973.8" y="1014.4" text-anchor="end">Soccer: Dutch Eredivisie</text>
<text x="1973.8" y="1036.7" text-anchor="end">Cricket: International Twenty20</text>
<text x="1973.8" y="1059.1" text-anchor="end">baseball_kbo</text>
<text x="1973.8" y="1081.5" text-anchor="end">Soccer: UEFA Champions League Women</text>
<text x="1973.8" y="1103.9" text-anchor="end">Soccer: Liga MX</text>
<text x="1973.8" y="1126.2" text-anchor="end">American Football: NFL</text>
<text x="1973.8" y="1148.6" text-anchor="end">Soccer: Allsvenskan - Sweden</text>
<text x="1986.4" y="1187.5" text-anchor="middle">-€400.00</text>
<text x="2057.3" y="1187.5" text-anchor="middle">-€200.00</text>
<text x="2128.1" y="1187.5" text-anchor="middle">€0.00</text>
<text x="2199.0" y="1187.5" text-anchor="middle">€200.00</text>
<text x="2269.8" y="1187.5" text-anchor="middle">€400.00</text>
<text x="2340.7" y="1187.5" text-anchor="middle">€600.00</text>
<text x="2411.5" y="1187.5" text-anchor="middle">€800.00</text>
<text x="2482.4" y="1187.5" text-anchor="middle">€1,000.00</text>
<rect x="2077.7" y="781.6" width="44.3" height="13.2" fill="#f59e0b"/>
<text x="2127.9" y="791.8">Profit</text>
</svg>
</body></html>
